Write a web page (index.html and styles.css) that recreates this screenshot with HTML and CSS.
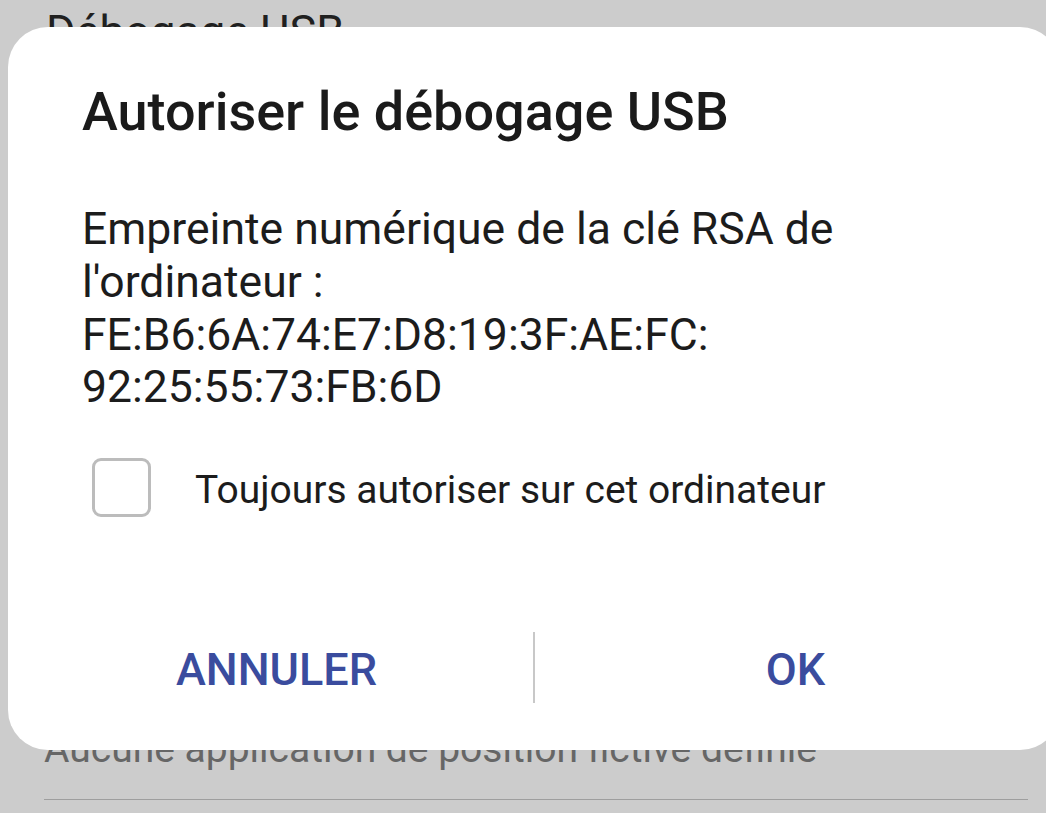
FILE: index.html
```html
<!DOCTYPE html>
<html lang="fr">
<head>
<meta charset="utf-8">
<title>Autoriser le débogage USB</title>
<link rel="stylesheet" href="styles.css">
</head>
<body>
<div class="screen">
  <div class="settings">
    <div class="setting-top">Débogage USB</div>
    <div class="setting-bottom">
      <div class="setting-summary">Aucune application de position fictive définie</div>
      <div class="setting-rule"></div>
    </div>
  </div>
  <div class="dialog">
    <div class="dialog-body">
      <h1 class="dialog-title">Autoriser le débogage USB</h1>
      <p class="dialog-message">Empreinte numérique de la clé RSA de l'ordinateur :<br>FE:B6:6A:74:E7:D8:19:3F:AE:FC:<br>92:25:55:73:FB:6D</p>
      <label class="check-row">
        <span class="checkbox"></span>
        <span class="check-label">Toujours autoriser sur cet ordinateur</span>
      </label>
    </div>
    <div class="dialog-actions">
      <div class="action action-cancel">ANNULER</div>
      <div class="action-sep"></div>
      <div class="action action-ok">OK</div>
    </div>
  </div>
</div>
</body>
</html>
```
FILE: styles.css
```css
html, body {
  margin: 0;
  padding: 0;
}
body {
  background: #cccccc;
  font-family: Roboto, "Noto Sans", sans-serif;
  overflow: hidden;
}
.screen {
  position: relative;
  width: 1046px;
  height: 813px;
  overflow: hidden;
}
.settings {
  height: 813px;
  display: flex;
  flex-direction: column;
  justify-content: space-between;
  padding: 0 18px 0 44px;
  box-sizing: border-box;
}
.setting-top {
  font-size: 45px;
  line-height: 52px;
  margin-top: 6px;
  margin-left: 2px;
  color: #202020;
}
.setting-bottom {
  padding-bottom: 13px;
}
.setting-summary {
  font-size: 39px;
  line-height: 46px;
  color: #666666;
}
.setting-rule {
  height: 1px;
  background: #9e9e9e;
  margin-top: 27px;
}
.dialog {
  position: absolute;
  left: 8px;
  top: 27px;
  width: 1052px;
  height: 723px;
  background: #ffffff;
  border-radius: 40px;
  display: flex;
  flex-direction: column;
  justify-content: space-between;
}
.dialog-body {
  padding: 53px 60px 0 74px;
}
.dialog-title {
  margin: 0;
  font-size: 54px;
  line-height: 64px;
  font-weight: 500;
  color: #1a1a1a;
}
.dialog-message {
  margin: 59px 0 0;
  font-size: 44.5px;
  line-height: 52.8px;
  color: #1c1c1c;
}
.check-row {
  display: flex;
  align-items: flex-start;
  margin-top: 44px;
  margin-left: 10px;
}
.checkbox {
  width: 59px;
  height: 59px;
  box-sizing: border-box;
  border: 3px solid #bcbcbc;
  border-radius: 9px;
  flex: none;
}
.check-label {
  margin-left: 44px;
  margin-top: 2.5px;
  font-size: 39px;
  line-height: 59px;
  color: #1c1c1c;
}
.dialog-actions {
  display: flex;
  align-items: center;
  height: 71px;
  margin-bottom: 47px;
}
.action {
  flex: 1;
  text-align: center;
  padding-top: 4px;
  font-size: 45px;
  font-weight: 500;
  color: #3a4c9e;
}
.action-cancel {
  padding-left: 12px;
}
.action-ok {
  padding-left: 4px;
  padding-right: 8px;
}
.action-sep {
  width: 2px;
  height: 71px;
  background: #c8c8c8;
}
```
